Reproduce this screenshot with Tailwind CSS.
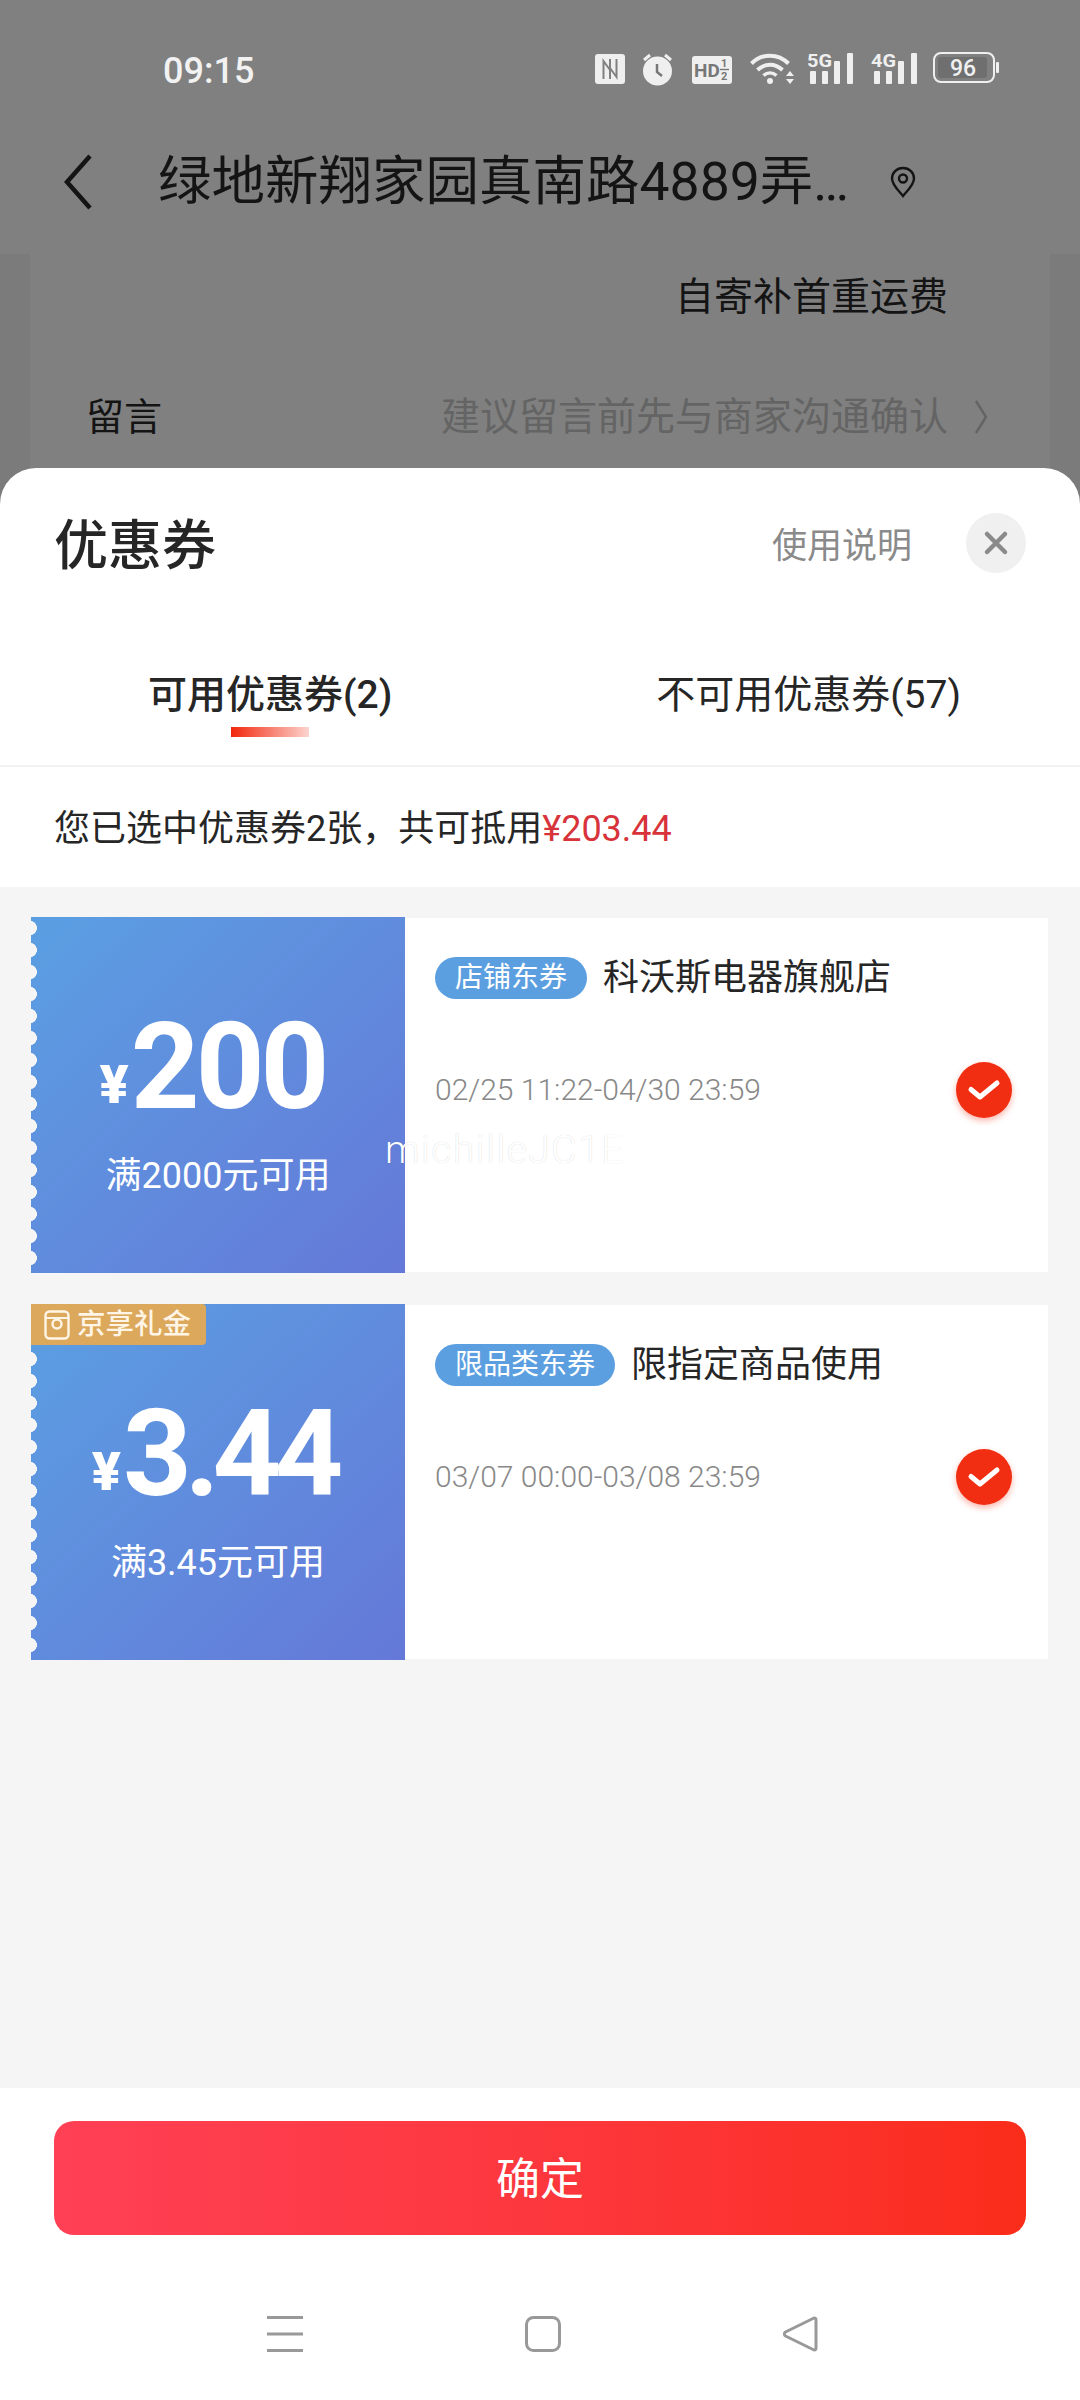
<!DOCTYPE html>
<html lang="zh-CN">
<head>
<meta charset="utf-8">
<script src="https://cdn.jsdelivr.net/npm/@tailwindcss/browser@4"></script>
</head>
<body class="m-0 bg-white">
<div class="relative w-[1080px] h-[2400px] overflow-hidden flex flex-col bg-white [font-family:Roboto,'Noto_Sans_CJK_SC',sans-serif]">

  <!-- dimmed page behind the sheet -->
  <div class="h-[508px] shrink-0 flex flex-col bg-[#7b7b7b]">
    <div class="h-[254px] shrink-0 flex flex-col bg-[#808080]">
      <div class="h-[140px] shrink-0 flex items-start pt-[52px] pl-[163px]">
        <span class="text-[36px] leading-[38px] font-medium text-[#f2f2f2] w-[432px]">09:15</span>
        <svg class="w-[30px] h-[30px] mt-[2px]" viewBox="0 0 30 30"><rect width="30" height="30" rx="3" fill="#efefef"/><path d="M8.500 25V7l6.500 9V5M15 25V14l6.500 9V5" fill="none" stroke="#808080" stroke-width="2"/></svg>
        <svg class="w-[31px] h-[34px] ml-[17px]" viewBox="0 0 31 34"><circle cx="15.500" cy="19" r="14.500" fill="#efefef"/><path d="M2 8l6-5M29 8l-6-5" stroke="#efefef" stroke-width="3"/><path d="M15 12v8l5 4" fill="none" stroke="#777" stroke-width="2.500"/></svg>
        <svg class="w-[40px] h-[28px] ml-[19px] mt-[4px]" viewBox="0 0 40 28"><rect width="40" height="28" rx="3" fill="#efefef"/><text x="2" y="21" font-family="Roboto" font-weight="700" font-size="19" fill="#777">HD</text><text x="29" y="11" font-family="Roboto" font-weight="700" font-size="11" fill="#777">1</text><text x="29" y="24" font-family="Roboto" font-weight="700" font-size="11" fill="#777">2</text><path d="M28 13.500h9" stroke="#777" stroke-width="1.400"/></svg>
        <svg class="w-[45px] h-[34px] ml-[18px]" viewBox="0 0 45 34"><g fill="none" stroke="#efefef" stroke-width="4"><path d="M1.500 11.500C12 1 28 1 38.500 11.500"/><path d="M7.500 18C15 11 25 11 32.500 18"/></g><path d="M13.500 23.500C17.500 20 22.500 20 26.500 23.500" fill="none" stroke="#efefef" stroke-width="3.500"/><circle cx="20" cy="29" r="3" fill="#efefef"/><path d="M36 24l4-5 4 5zM36 27l4 5 4-5z" fill="#efefef"/></svg>
        <svg class="w-[47px] h-[38px] -mt-[6px] ml-[12px]" viewBox="0 -6 47 38"><text x="0" y="15" font-family="Roboto" font-weight="700" font-size="19" fill="#efefef" textLength="25" lengthAdjust="spacingAndGlyphs">5G</text><g fill="#efefef"><rect x="3" y="19" width="6" height="13" rx="1"/><rect x="15" y="19" width="6" height="13" rx="1"/><rect x="27" y="9" width="6" height="23" rx="1"/><rect x="40" y="1" width="6" height="31" rx="1"/></g></svg>
        <svg class="w-[47px] h-[38px] -mt-[6px] ml-[17px]" viewBox="0 -6 47 38"><text x="0" y="15" font-family="Roboto" font-weight="700" font-size="19" fill="#efefef" textLength="25" lengthAdjust="spacingAndGlyphs">4G</text><g fill="#efefef"><rect x="3" y="19" width="6" height="13" rx="1"/><rect x="15" y="19" width="6" height="13" rx="1"/><rect x="27" y="9" width="6" height="23" rx="1"/><rect x="40" y="1" width="6" height="31" rx="1"/></g></svg>
        <svg class="w-[66px] h-[32px] ml-[15px]" viewBox="0 0 66 32"><rect x="1" y="1" width="60" height="29" rx="7" fill="none" stroke="#efefef" stroke-width="2"/><rect x="5" y="5" width="49" height="21" rx="3" fill="#6f6f6f"/><text x="17" y="24" font-family="Roboto" font-weight="500" font-size="23" fill="#efefef">96</text><rect x="63" y="10" width="3" height="11" rx="1" fill="#efefef"/></svg>
      </div>
      <div class="flex items-center h-[84px] pl-[64px]">
        <svg class="w-[28px] h-[56px] shrink-0" viewBox="0 0 28 56"><path d="M26 2L3 28l23 26" fill="none" stroke="#141414" stroke-width="4.500"/></svg>
        <span class="ml-[66px] text-[53.500px] leading-[84px] text-[#141414] whitespace-nowrap w-[692px]">绿地新翔家园真南路4889弄<span class="tracking-[-3px]">...</span></span>
        <svg class="ml-[40px] w-[26px] h-[32px] shrink-0" viewBox="0 0 26 32"><path d="M13 2C6.500 2 2 6.800 2 12.500 2 19 9 25 13 30c4-5 11-11 11-17.500C24 6.800 19.500 2 13 2z" fill="none" stroke="#141414" stroke-width="2.400"/><circle cx="13" cy="12.500" r="4" fill="none" stroke="#141414" stroke-width="2.400"/></svg>
      </div>
    </div>
    <div class="mx-[30px] flex-1 bg-[#808080] relative flex flex-col">
      <div class="flex justify-end pr-[102px] pt-[19px] h-[139px]">
        <span class="text-[39px] leading-[48px] text-[#141414]">自寄补首重运费</span>
      </div>
      <div class="flex items-center h-[48px] pl-[56px] pr-[62px]">
        <span class="text-[38px] leading-[48px] text-[#141414]">留言</span>
        <span class="ml-auto text-[39px] leading-[48px] text-[#646464]">建议留言前先与商家沟通确认</span>
        <svg class="ml-[26px] w-[14px] h-[36px]" viewBox="0 0 14 36"><path d="M2 2l10 16L2 34" fill="none" stroke="#646464" stroke-width="2.500"/></svg>
      </div>
    </div>
  </div>

  <!-- sheet -->
  <div class="-mt-[40px] flex-1 flex flex-col bg-white rounded-t-[36px] relative">
    <div class="flex items-center h-[150px] pt-[7px] pl-[54px] pr-[54px] shrink-0">
      <span class="text-[54px] leading-[60px] font-medium text-[#262626]">优惠券</span>
      <span class="ml-auto text-[35px] leading-[44px] text-[#8a8a8a]">使用说明</span>
      <div class="ml-[54px] -mt-[7px] w-[60px] h-[60px] rounded-full bg-[#f0f0f0] flex items-center justify-center">
        <svg class="w-[26px] h-[26px]" viewBox="0 0 26 26"><path d="M4 4l18 18M22 4L4 22" stroke="#8a8a8a" stroke-width="4.500" stroke-linecap="round"/></svg>
      </div>
    </div>
    <div class="relative h-[149px] shrink-0 border-b-2 border-[#f2f2f2]">
      <div class="flex justify-between pl-[148px] pr-[119px] pt-[52px]">
        <span class="text-[39px] leading-[50px] font-medium text-[#262626]">可用优惠券(2)</span>
        <span class="text-[39px] leading-[50px] text-[#262626]">不可用优惠券(57)</span>
      </div>
      <div class="absolute left-[231px] top-[109px] w-[78px] h-[10px] bg-gradient-to-r from-[#f2270c] to-[#f2270c]/20"></div>
    </div>
    <div class="h-[120px] shrink-0 flex items-center pt-[4px] pl-[54px] text-[36px] leading-[44px] text-[#262626]">
      <span>您已选中优惠券2张，共可抵用<span class="text-[#d8333a]">¥203.44</span></span>
    </div>

    <div class="flex-1 bg-[#f5f5f5] pt-[30px] pl-[31px] pr-[32px] flex flex-col gap-[31px]">
      <!-- coupon 1 -->
      <div class="flex h-[356px]">
        <div class="relative w-[374px] shrink-0 bg-gradient-to-br from-[#5a9fe2] to-[#6478d8] flex flex-col items-center text-white">
          <div class="absolute left-0 top-0 bottom-0 w-[6px] bg-[radial-gradient(ellipse_6px_7px_at_0_50%,#f5f5f5_95%,transparent_100%)] bg-[length:6px_22px]"></div>
          <div class="flex items-end mt-[103px] h-[100px] pr-[11px]">
            <span class="text-[54px] leading-[54px] font-black mb-[8px] mr-[2px]">¥</span>
            <span class="text-[120px] leading-[100px] font-bold tracking-[-4px] mb-[3px]">200</span>
          </div>
          <span class="mt-[34px] text-[36px] leading-[44px]">满2000元可用</span>
        </div>
        <div class="flex-1 my-[1px] bg-white pl-[30px] pr-[36px] pt-[39px] flex flex-col">
          <div class="flex items-center h-[42px]">
            <span class="h-[42px] px-[20px] rounded-full bg-[#5b9fe0] text-white text-[28px] leading-[42px] whitespace-nowrap">店铺东券</span>
            <span class="ml-[16px] text-[36px] leading-[42px] text-[#262626] whitespace-nowrap">科沃斯电器旗舰店</span>
          </div>
          <div class="flex items-center justify-between mt-[62px]">
            <span class="text-[30px] leading-[58px] font-light text-[#888888]">02/25 11:22-04/30 23:59</span>
            <span class="w-[56px] h-[56px] rounded-full bg-[#f22e12] shadow-[0_3px_6px_rgba(242,46,18,0.35)] flex items-center justify-center">
              <svg class="w-[34px] h-[24px]" viewBox="0 0 34 24"><path d="M4 11.500l9 7.500L30 5" fill="none" stroke="#fff" stroke-width="5" stroke-linecap="round" stroke-linejoin="round"/></svg>
            </span>
          </div>
        </div>
      </div>
      <!-- coupon 2 -->
      <div class="flex h-[356px]">
        <div class="relative w-[374px] shrink-0 bg-gradient-to-br from-[#5a9fe2] to-[#6478d8] flex flex-col items-center text-white">
          <div class="absolute left-0 top-0 bottom-0 w-[6px] bg-[radial-gradient(ellipse_6px_7px_at_0_50%,#f5f5f5_95%,transparent_100%)] bg-[length:6px_22px]"></div>
          <div class="absolute left-0 top-0 w-[175px] h-[41px] bg-[#dba85c] rounded-br-[4px] rounded-tr-[4px] flex items-center pl-[13px]">
            <svg class="w-[26px] h-[30px] shrink-0" viewBox="0 0 26 30"><rect x="1.500" y="1.500" width="23" height="27" rx="4" fill="none" stroke="#fff5e6" stroke-width="2.400"/><path d="M2 8h22" stroke="#fff5e6" stroke-width="2"/><circle cx="13" cy="14" r="4.500" fill="none" stroke="#fff5e6" stroke-width="2.400"/></svg>
            <span class="ml-[7px] text-[28.500px] leading-[41px] font-medium text-[#fff5e6] whitespace-nowrap">京享礼金</span>
          </div>
          <div class="flex items-end mt-[103px] h-[100px] pr-[8px]">
            <span class="text-[54px] leading-[54px] font-black mb-[8px] mr-[2px]">¥</span>
            <span class="text-[120px] leading-[100px] font-bold tracking-[-7px] mb-[3px]">3.44</span>
          </div>
          <span class="mt-[34px] text-[36px] leading-[44px]">满3.45元可用</span>
        </div>
        <div class="flex-1 my-[1px] bg-white pl-[30px] pr-[36px] pt-[39px] flex flex-col">
          <div class="flex items-center h-[42px]">
            <span class="h-[42px] px-[20px] rounded-full bg-[#5b9fe0] text-white text-[28px] leading-[42px] whitespace-nowrap">限品类东券</span>
            <span class="ml-[16px] text-[36px] leading-[42px] text-[#262626] whitespace-nowrap">限指定商品使用</span>
          </div>
          <div class="flex items-center justify-between mt-[62px]">
            <span class="text-[30px] leading-[58px] font-light text-[#888888]">03/07 00:00-03/08 23:59</span>
            <span class="w-[56px] h-[56px] rounded-full bg-[#f22e12] shadow-[0_3px_6px_rgba(242,46,18,0.35)] flex items-center justify-center">
              <svg class="w-[34px] h-[24px]" viewBox="0 0 34 24"><path d="M4 11.500l9 7.500L30 5" fill="none" stroke="#fff" stroke-width="5" stroke-linecap="round" stroke-linejoin="round"/></svg>
            </span>
          </div>
        </div>
      </div>
    </div>

    <div class="h-[312px] shrink-0 bg-white flex flex-col">
      <div class="mt-[33px] mx-[54px] h-[114px] pt-[3px] rounded-[20px] bg-gradient-to-r from-[#ff4055] to-[#fa2c19] flex items-center justify-center text-white text-[44px]">确定</div>
      <div class="mt-[81px] flex justify-center items-center gap-[222px] pl-[6px]">
        <svg class="w-[36px] h-[36px]" viewBox="0 0 36 36"><path d="M0 1.500h36M0 18h36M0 34.500h36" stroke="#999" stroke-width="3"/></svg>
        <svg class="w-[36px] h-[36px]" viewBox="0 0 36 36"><rect x="1.500" y="1.500" width="33" height="33" rx="7" fill="none" stroke="#999" stroke-width="3"/></svg>
        <svg class="w-[36px] h-[36px]" viewBox="0 0 36 36"><path d="M33 3.500c0-1.500-1.500-2-3-1L2.500 16c-1.500 1-1.500 3 0 4L30 33.500c1.500 1 3 .5 3-1z" fill="none" stroke="#999" stroke-width="3" stroke-linejoin="round"/></svg>
      </div>
    </div>
  </div>

  <!-- watermark -->
  <div class="absolute left-[385px] top-[1124px] text-[39px] leading-[52px] tracking-[1.500px] text-white [text-shadow:0_0_1px_rgba(0,0,0,0.2)] whitespace-nowrap [font-family:Roboto,sans-serif] font-light">michilleJC1E</div>
</div>
</body>
</html>
